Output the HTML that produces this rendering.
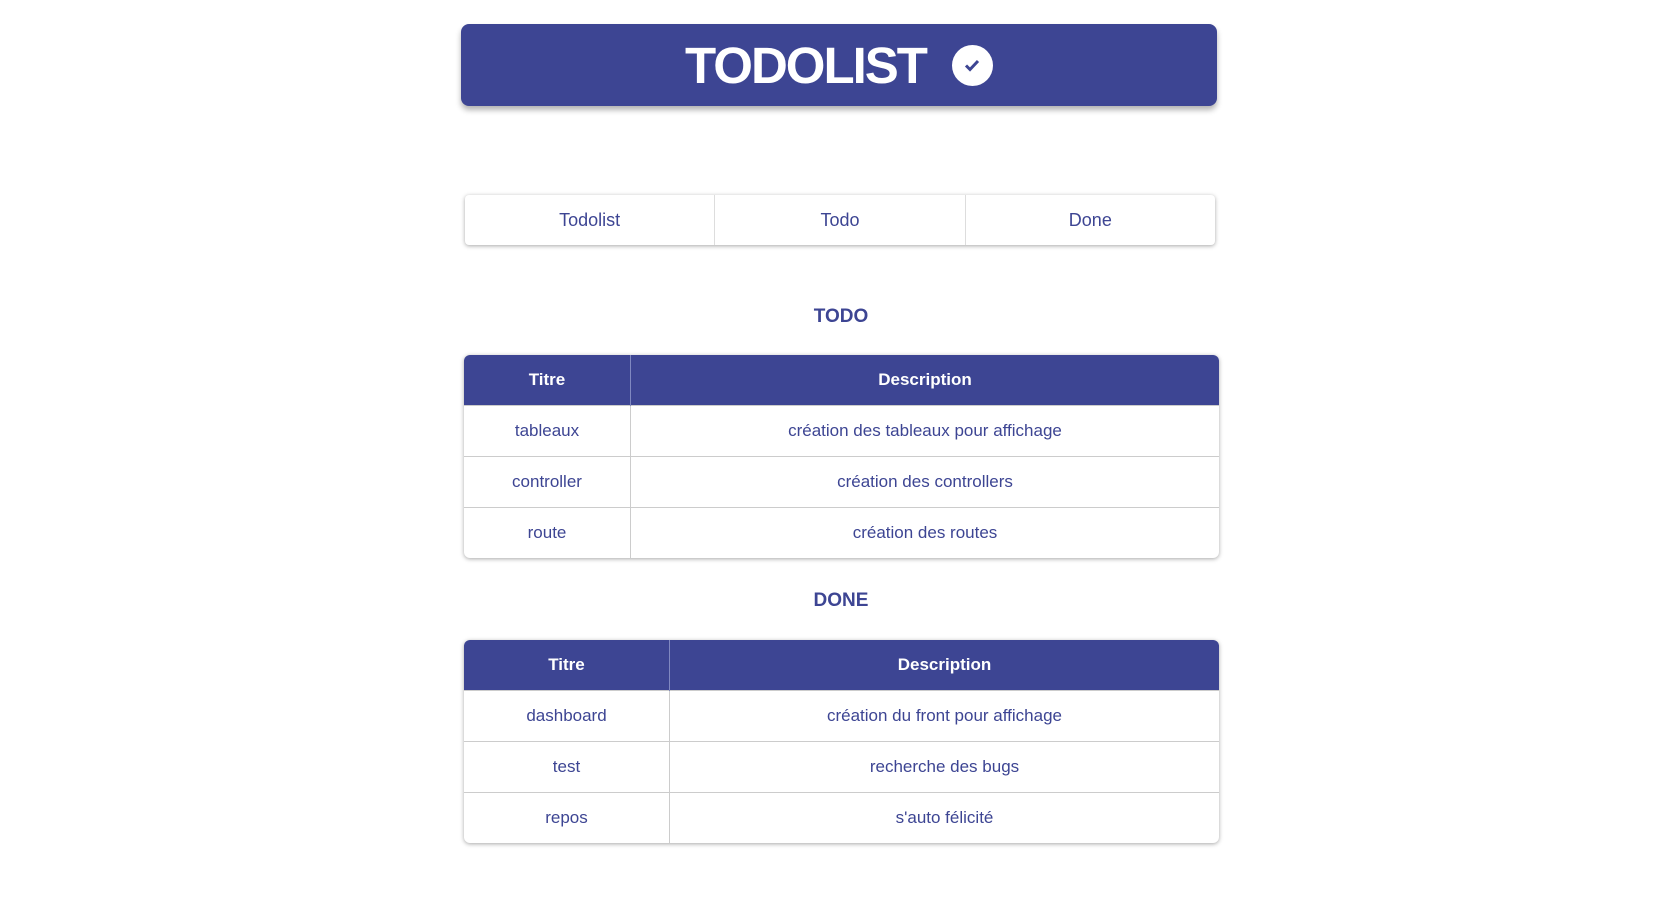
<!DOCTYPE html>
<html><head><meta charset="utf-8"><style>
body{margin:0;width:1677px;height:923px;background:#fff;font-family:"Liberation Sans",sans-serif;color:#3d4593;position:relative}
.hdr{position:absolute;left:461px;top:24px;width:756px;height:82px;background:#3d4593;border-radius:8px;box-shadow:0 4px 6px rgba(0,0,0,.3);color:#fff;display:flex;align-items:center;justify-content:center}
.hdr span{font-size:51px;font-weight:bold;letter-spacing:-2px}
.chk{width:41px;height:41px;border-radius:50%;background:#fff;margin-left:26px;display:flex;align-items:center;justify-content:center}
.tabs{position:absolute;left:465px;top:195px;width:750px;height:50px;display:flex;border-radius:4px;box-shadow:0 1px 4px rgba(0,0,0,.35)}
.tabs div{flex:1;display:flex;align-items:center;justify-content:center;font-size:18px;border-right:1px solid #ddd}
.tabs div:last-child{border:none}
h2{position:absolute;left:0;width:1682px;text-align:center;font-size:19px;margin:0;font-weight:bold}
table{position:absolute;left:464px;width:755px;border-collapse:collapse;box-shadow:0 1px 4px rgba(0,0,0,.35);border-radius:6px;overflow:hidden;font-size:17px}
th,td{padding:0}
th{background:#3d4593;color:#fff;height:50px;font-weight:bold;border-right:1px solid #8088c0}
td{height:50px;text-align:center;border-top:1px solid #ccc;border-right:1px solid #ccc}
th:last-child,td:last-child{border-right:none}
</style></head><body>
<div class="hdr"><span>TODOLIST</span><div class="chk"><svg width="20" height="20" viewBox="0 0 20 20"><path d="M4 10.5l4 4 8-8.5" stroke="#3d4593" stroke-width="3" fill="none"/></svg></div></div>
<div class="tabs"><div>Todolist</div><div>Todo</div><div>Done</div></div>
<h2 style="top:306px">TODO</h2>
<table style="top:355px"><tr><th style="width:166px">Titre</th><th>Description</th></tr>
<tr><td>tableaux</td><td>création des tableaux pour affichage</td></tr>
<tr><td>controller</td><td>création des controllers</td></tr>
<tr><td>route</td><td>création des routes</td></tr></table>
<h2 style="top:590px">DONE</h2>
<table style="top:640px"><tr><th style="width:205px">Titre</th><th>Description</th></tr>
<tr><td>dashboard</td><td>création du front pour affichage</td></tr>
<tr><td>test</td><td>recherche des bugs</td></tr>
<tr><td>repos</td><td>s'auto félicité</td></tr></table>
</body></html>
